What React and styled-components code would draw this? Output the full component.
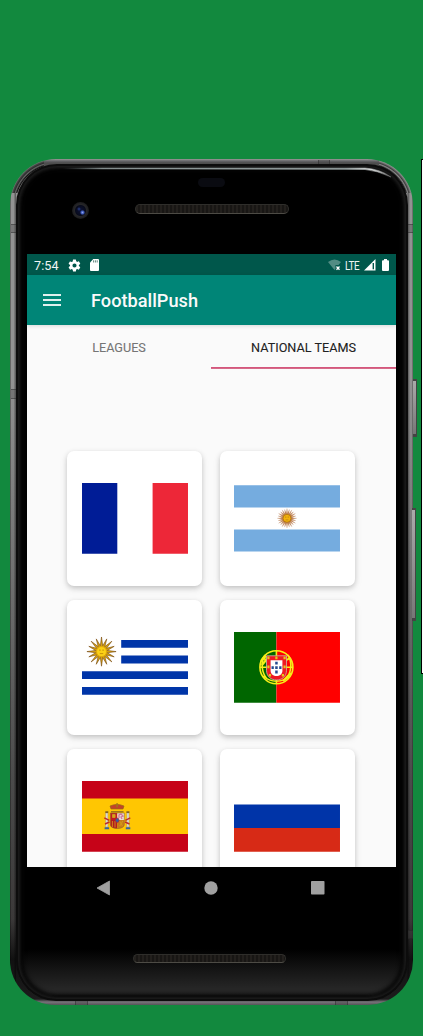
import React from "react";
import styled, { createGlobalStyle } from "styled-components";

const GlobalStyle = createGlobalStyle`
  *, *::before, *::after { box-sizing: border-box; }
  html, body { margin: 0; background: #12893e; }
  body { font-family: Roboto, "Liberation Sans", sans-serif; overflow: hidden; }
  svg { display: block; }
`;

const Page = styled.main`
  position: relative;
  width: 423px;
  height: 1036px;
  padding: 159px 0 0 10px;
  background: #12893e;
  overflow: hidden;
`;

const NextPanel = styled.aside`
  position: absolute;
  top: 159px;
  left: 421px;
  width: 40px;
  height: 515px;
  border: 1px solid #000;
  background: #fafafa;
`;

const Device = styled.div`
  position: relative;
  width: 403px;
  height: 846px;
  padding: 5px 5px 4px 6px;
  border-radius: 46px 46px 45px 45px;
  background:
    radial-gradient(circle at 46px 46px, transparent 40px, #111 41px, #666 42.5px, #2b2b2b 43.5px, #4a4a4a 45px, #777 46px) 0 0 / 34px 34px no-repeat,
    radial-gradient(circle at -12px 46px, transparent 40px, #222 41px, #888 42.5px, #3c3c3c 43.5px, #777 45px, #999 46px) 100% 0 / 34px 34px no-repeat,
    linear-gradient(90deg, rgba(0,0,0,.45) 0, transparent 1.5px, transparent 3.5px, rgba(0,0,0,.45) 6px, transparent 6px, transparent 397px, rgba(0,0,0,.4) 398px, transparent 400px, transparent 401.5px, rgba(0,0,0,.35) 403px),
    linear-gradient(#9c9a99 0, #66666a 2px, #4c4c4c 4px, #929292 34px, #929292 220px, #737373 400px, #4b4b4b 620px, #3b3939 760px, #111 800px, #1c1c1c 840px, #77747a 843px, #565358 846px);
`;

const SideKey = styled.span`
  position: absolute;
  z-index: 1;
  left: ${(p) => p.$x}px;
  top: ${(p) => p.$y}px;
  width: 4px;
  height: ${(p) => p.$h}px;
  border-radius: 0 1px 1px 0;
  border: solid #444;
  border-width: 2px 1px 3px 0;
  background: linear-gradient(#aaa, #777);
`;

const Antenna = styled.span`
  position: absolute;
  left: ${(p) => p.$x}px;
  top: ${(p) => p.$y}px;
  width: ${(p) => p.$w}px;
  height: ${(p) => p.$h}px;
  background: rgba(70, 70, 70, 0.35);
  border: solid rgba(30, 30, 30, 0.4);
  border-width: ${(p) => (p.$w > p.$h ? "0 1px" : "1px 0")};
`;

const Face = styled.div`
  position: relative;
  display: flex;
  flex-direction: column;
  height: 837px;
  padding: 0 11px;
  border-radius: 41px 41px 40px 40px;
  background: linear-gradient(transparent 785px, #161616 807px, #2c2c2c 831px, #090909 833px), #000;
  box-shadow: inset 0 0 0 2px #0c0c0c, inset 0 0 3px 4px #1c1c1c, inset 0 0 4px 7px #050505;
`;

const GlassShine = styled.svg`
  position: absolute;
  left: 47px;
  top: 2px;
`;

const Forehead = styled.header`
  position: relative;
  flex: 0 0 90px;
`;

const Sensor = styled.span`
  position: absolute;
  left: 171px;
  top: 14px;
  width: 27px;
  height: 9px;
  border-radius: 5px;
  background: #0a0b11;
`;

const Camera = styled.span`
  position: absolute;
  left: 44.5px;
  top: 37.5px;
  width: 17px;
  height: 17px;
  border-radius: 50%;
  background:
    radial-gradient(circle at 10.5px 10.5px, #8fa6f0 0, #3a56b8 1.5px, transparent 2.6px),
    radial-gradient(circle at 7px 7px, #293f8c 0, transparent 2px),
    radial-gradient(circle, #0c1238 0, #080b1c 5px, #262628 6px, #222224 7px, #1a1a1c 8.5px);
`;

const Grille = styled.span`
  position: absolute;
  left: ${(p) => p.$x}px;
  top: ${(p) => p.$y}px;
  width: ${(p) => p.$w}px;
  height: ${(p) => p.$h}px;
  border-radius: 5px;
  border: 1px solid #2f2e2b;
  border-bottom-color: #4d4b45;
  background: repeating-linear-gradient(90deg, #23201d 0 2px, #181614 2px 4px);
`;

const Screen = styled.section`
  display: flex;
  flex-direction: column;
  flex: 0 0 613px;
  width: 369px;
  overflow: hidden;
  background: #fafafa;
`;

const StatusBar = styled.div`
  display: flex;
  align-items: center;
  flex: 0 0 21px;
  padding: 1px 7px 0;
  color: #f0f5f4;
  background: #00574b;
  font-size: 12.6px;
`;

const Clock = styled.span`
  width: 34px;
  letter-spacing: 0.1px;
`;

const StatusIcons = styled.div`
  display: flex;
  align-items: center;
  gap: ${(p) => p.$gap}px;
  margin-left: ${(p) => (p.$end ? "auto" : 0)};
`;

const Network = styled.span`
  display: inline-block;
  width: 16px;
  margin-left: 1px;
  font-size: 12.4px;
  transform: scaleX(0.8);
  transform-origin: left center;
  letter-spacing: -0.5px;
`;

const AppBar = styled.div`
  position: relative;
  display: flex;
  align-items: center;
  flex: 0 0 50px;
  padding: 0 16px;
  gap: 30.5px;
  color: #fafafa;
  background: #008577;
  box-shadow: 0 1px 4px rgba(0, 0, 0, 0.14);
`;

const MenuButton = styled.button`
  display: flex;
  flex-direction: column;
  gap: 3px;
  width: 17.5px;
  padding: 0;
  border: 0;
  background: none;
`;

const MenuLine = styled.span`
  height: 2px;
  background: #e0f0ee;
`;

const Title = styled.h1`
  margin: 0;
  font-size: 18.2px;
  font-weight: 500;
`;

const Tabs = styled.nav`
  display: grid;
  grid-template-columns: 184px 185px;
  flex: 0 0 44px;
`;

const Tab = styled.button`
  padding: 1px 0 0;
  border: 0;
  background:
    linear-gradient(${(p) => (p.$active ? "#e7a0b6, #c92a5a 40%, #d05578 70%, #f3d0da" : "transparent, transparent")})
    0 41.500px / 100% 2px no-repeat;
  color: ${(p) => (p.$active ? "#212121" : "#757575")};
  font: 400 12.65px Roboto, sans-serif;
  -webkit-text-stroke: 0.1px;
`;

const TeamGrid = styled.div`
  display: grid;
  grid-template-columns: 135px 135px;
  grid-auto-rows: 134.5px;
  column-gap: 17.4px;
  row-gap: 14.7px;
  padding: 82px 0 0 40.4px;
`;

const TeamCard = styled.article`
  display: grid;
  place-items: center;
  border-radius: 7px;
  background: #fff;
  box-shadow: 0 2px 5px rgba(0, 0, 0, 0.17), 0 3px 8px rgba(0, 0, 0, 0.08);
`;

const NavBar = styled.footer`
  display: flex;
  align-items: center;
  justify-content: space-between;
  flex: 0 0 42px;
  padding: 0 72px 0 69px;
`;

const Chin = styled.div`
  position: relative;
  flex: 1;
`;

function FlagFrame({ children, label }) {
  return (
    <svg width="106" height="70.7" viewBox="0 0 106 70.7" role="img" aria-label={label}>
      {children}
    </svg>
  );
}

function Sun({ cx, cy, inner, outer, rays, core, thin }) {
  const points = Array.from({ length: rays * 2 }, (_, i) => {
    const a = (i * Math.PI) / rays - Math.PI / 2;
    const r = i % 2 ? inner : outer * (i % 4 ? 0.94 : 1);
    return `${cx + Math.cos(a) * r},${cy + Math.sin(a) * r}`;
  }).join(" ");
  return (
    <g>
      <polygon points={points} fill={thin ? "#c18453" : "#d6a211"} stroke={thin ? "#b27958" : "#75470a"} strokeWidth={thin ? 0.2 : 0.6} />
      <circle cx={cx} cy={cy} r={core} fill={thin ? "#f3b20c" : "#fbd116"} stroke={thin ? "#a66808" : "#d79d0b"} strokeWidth=".7" />
      <path d={`M${cx - core * 0.5} ${cy - core * 0.3}h${core * 0.35}m${core * 0.3} 0h${core * 0.35}M${cx - core * 0.35} ${cy + core * 0.4}h${core * 0.7}`} stroke="#b98309" strokeWidth=".8" fill="none" />
    </g>
  );
}

const France = () => (
  <FlagFrame label="France">
    <path fill="#001c96" d="M0 0h35.3v70.7H0z" />
    <path fill="#ed2738" d="M70.6 0H106v70.7H70.6z" />
  </FlagFrame>
);

const Argentina = () => (
  <FlagFrame label="Argentina">
    <path fill="#75acdf" d="M0 2.2h106v22.2H0zM0 46.4h106v22.2H0z" />
    <Sun cx={53} cy={35.3} inner={5} outer={9.7} rays={24} core={4} thin />
  </FlagFrame>
);

const Uruguay = () => (
  <FlagFrame label="Uruguay">
    <path fill="#0035a8" d="M39.2 7.9H106v7.8H39.2zM39.2 23.6H106v7.8H39.2zM0 39.3h106v7.8H0zM0 55h106v7.8H0z" />
    <Sun cx={19.5} cy={19.6} inner={6} outer={14.6} rays={16} core={5} />
  </FlagFrame>
);

const Portugal = () => (
  <FlagFrame label="Portugal">
    <path fill="#060" d="M0 0h42.4v70.7H0z" />
    <path fill="red" d="M42.4 0H106v70.7H42.4z" />
    <g fill="none" stroke="#f7ee18" strokeWidth="1.6">
      <circle cx="42.4" cy="35.3" r="16.5" />
      <path d="M42.4 18.8v33M26 35.3h33M29 26c7 5 20 5 27 0M29 44c8 7 19 7 27 0M31 23c-5 8-3 18 2 24M54 23c5 8 3 18-2 24" />
      <path d="M27 29l5-5M28 33l4-5M52 46l5-5M49 49l5-5" strokeWidth="2.2" />
    </g>
    <path d="M32.5 23.8h20v14.5c0 13-20 13-20 0z" fill="#ee1822" stroke="#c8b9ab" strokeWidth=".8" />
    <path d="M36.6 28.3h11.8v10.4c0 7-11.8 7-11.8 0z" fill="#fff" />
    <g fill="#25488f">
      <path d="M41.2 29.8h2.500v2.800h-2.500zM41.200 34.200h2.500v2.800h-2.500zM41.200 38.600h2.500v2.800h-2.500zM37.500 34.200h2.300v2.800h-2.300zM45.200 34.200h2.300v2.800h-2.300z" />
    </g>
    <g fill="#e5c51c">
      <path d="M33.3 24.4h2.2v2.8h-2.2zM41.3 24.4h2.2v2.8h-2.2zM49.5 24.4h2.2v2.8h-2.2zM33.3 33.5h2.2v2.8h-2.2zM49.5 33.5h2.2v2.8h-2.2zM34.9 42h2.2v2.4h-2.2zM47.8 42H50v2.4h-2.2z" />
    </g>
  </FlagFrame>
);

const Spain = () => (
  <FlagFrame label="Spain">
    <path fill="#c60318" d="M0 0h106v70.7H0z" />
    <path fill="#ffc602" d="M0 17.6h106V53H0z" />
    <path d="M29 28l-1-3 3-1 4-.8 4 .8 3 1-1 3z" fill="#c2432a" stroke="#986b17" strokeWidth=".7" />
    <path d="M34.3 22.3h1.6v4h-1.6zM29 30h12.5v1.6H29z" fill="#a07719" />
    <path d="M28.3 32h7v7h-7z" fill="#bd1c22" />
    <path d="M35.3 32h7v7h-7z" fill="#eadbd6" />
    <path d="M37 37v-3l2-1 2 2-2 1 1 2" fill="none" stroke="#cf749c" strokeWidth="1.3" />
    <path d="M28.3 39h7v8.5c-4 0-7-1-7-4z" fill="#b31b1d" />
    <path d="M35.3 39h7v4.5c0 3-3 4-7 4z" fill="#c97b19" />
    <path d="M30.5 33.5h2.6v3h-2.6zM30.4 40v6M33 40v6.5M37.5 40l3 5M40.8 40l-3 5" fill="#d5a41c" stroke="#d4a11b" strokeWidth=".8" />
    <path d="M28.3 32h14v11.5c0 5.4-14 5.4-14 0z" fill="none" stroke="#8f6529" strokeWidth=".6" />
    <ellipse cx="35.3" cy="39.3" rx="1.8" ry="2.2" fill="#315fa1" stroke="#bd242c" strokeWidth=".6" />
    <path d="M23.6 32h2.3v14h-2.3zM44.8 32h2.3v14h-2.3z" fill="#dedcd5" stroke="#947f62" strokeWidth=".35" />
    <path d="M22.6 46.3h4.5v2h-4.5zM43.8 46.3h4.5v2h-4.5z" fill="#3a64a0" />
    <path d="M23.3 30.2h3v1.8h-3zM44.4 30.2h3v1.8h-3z" fill="#806229" />
    <path d="M22.3 37l5 2.5M23 43l4.5-2M48.3 37l-5 2.5M47.5 43l-4.5-2" stroke="#bd2b2d" strokeWidth="1.4" />
  </FlagFrame>
);

const Russia = () => (
  <FlagFrame label="Russia">
    <path fill="#0034a8" d="M0 23.5h106v23.6H0z" />
    <path fill="#d72a16" d="M0 47.1h106v23.6H0z" />
  </FlagFrame>
);

const GearIcon = () => (
  <svg width="13" height="13" viewBox="1 1 22 22" fill="#fff">
    <path fillRule="evenodd" d="M19.4 13a8 8 0 0 0 0-2l2.1-1.7c.2-.1.2-.4.1-.6l-2-3.5c-.1-.2-.4-.3-.6-.2l-2.5 1a7 7 0 0 0-1.7-1L14.4 2.4c0-.2-.2-.4-.5-.4h-4c-.2 0-.4.2-.5.4L9 5.1a7 7 0 0 0-1.7 1l-2.5-1c-.2-.1-.5 0-.6.2l-2 3.5c-.1.2-.1.5.1.6L4.500 11a8 8 0 0 0 0 2l-2.2 1.7c-.2.1-.2.4-.1.6l2 3.5c.1.2.4.3.6.2l2.5-1 1.700 1 .4 2.600c.1.2.3.4.5.4h4c.3 0 .5-.2.5-.4l.4-2.600a7 7 0 0 0 1.700-1l2.500 1c.2.1.5 0 .6-.2l2-3.500c.1-.2.1-.5-.1-.6zM12 15.500a3.500 3.500 0 1 1 0-7 3.500 3.500 0 0 1 0 7z" />
  </svg>
);

const CardIcon = () => (
  <svg width="9" height="12" viewBox="0 0 9 12">
    <path d="M3.3 0H8q1 0 1 1v10q0 1-1 1H1q-1 0-1-1V3.500z" fill="#fff" />
    <path d="M3.600 1.300v2.200M5.400 1.300v2.200M7.200 1.300v2.200" stroke="#50786f" strokeWidth=".9" />
  </svg>
);

const WifiIcon = () => (
  <svg width="13" height="12" viewBox="0 0 13 12">
    <path d="M0 3Q6.5-2 13 3L10.500 6H7.500v4L6.500 11z" fill="#528c83" />
    <path d="M8.500 7.500l3 3.300m0-3.300l-3 3.300" stroke="#fff" strokeWidth="1.300" />
  </svg>
);

const SignalIcon = () => (
  <svg width="12" height="12" viewBox="0 0 12 12">
    <path d="M0 11.500L11.500 0v11.500z" fill="#fff" />
    <path d="M9.300 4v6.300" stroke="#00574b" strokeWidth="1.400" />
  </svg>
);

const BatteryIcon = () => (
  <svg width="7" height="12" viewBox="0 0 7 12">
    <path d="M2 0h3v1.300h1q1 0 1 1V11q0 1-1 1H1q-1 0-1-1V2.300q0-1 1-1h1z" fill="#fff" />
  </svg>
);

const flags = [France, Argentina, Uruguay, Portugal, Spain, Russia];

export default function App() {
  return (
    <Page>
      <GlobalStyle />
      <NextPanel />
      <Device>
        <SideKey $x={403} $y={220} $h={58} />
        <SideKey $x={402} $y={349} $h={113} />
        <Antenna $x={1} $y={65} $w={5} $h={9} />
        <Antenna $x={398} $y={65} $w={5} $h={9} />
        <Antenna $x={1} $y={230} $w={5} $h={10} />
        <Antenna $x={308} $y={1} $w={12} $h={4} />
        <Antenna $x={65} $y={841} $w={13} $h={5} />
        <Antenna $x={325} $y={841} $w={13} $h={5} />
        <Antenna $x={398} $y={771} $w={5} $h={9} />
        <Face>
          <GlassShine width="330" height="14" viewBox="0 0 330 14">
            <defs>
              <linearGradient id="shine">
                <stop offset="0" stopColor="#4b5557" stopOpacity="0" />
                <stop offset=".12" stopColor="#8c9696" />
                <stop offset=".86" stopColor="#8c9696" />
                <stop offset=".94" stopColor="#d5d8d8" />
                <stop offset="1" stopColor="#777" />
              </linearGradient>
            </defs>
            <path d="M0 2H302Q317 3 328 11Q314 4.5 302 3.5L0 2.8z" fill="url(#shine)" stroke="url(#shine)" strokeWidth=".5" />
          </GlassShine>
          <Forehead>
            <Sensor />
            <Camera />
            <Grille $x={108} $y={40} $w={154} $h={10} />
          </Forehead>
          <Screen>
            <StatusBar>
              <Clock>7:54</Clock>
              <StatusIcons $gap={9}>
                <GearIcon />
                <CardIcon />
              </StatusIcons>
              <StatusIcons $end $gap={3}>
                <WifiIcon />
                <Network>LTE</Network>
                <SignalIcon />
                <StatusIcons $gap={0}>
                  <svg width="3" height="1" />
                  <BatteryIcon />
                </StatusIcons>
              </StatusIcons>
            </StatusBar>
            <AppBar>
              <MenuButton aria-label="Menu">
                <MenuLine />
                <MenuLine />
                <MenuLine />
              </MenuButton>
              <Title>FootballPush</Title>
            </AppBar>
            <Tabs>
              <Tab>LEAGUES</Tab>
              <Tab $active>NATIONAL TEAMS</Tab>
            </Tabs>
            <TeamGrid>
              {flags.map((Flag, i) => (
                <TeamCard key={i}>
                  <Flag />
                </TeamCard>
              ))}
            </TeamGrid>
          </Screen>
          <NavBar>
            <svg width="14" height="16" viewBox="0 0 14 16">
              <path d="M1 8L13.5 1v14z" fill="#a0a0a0" stroke="#a0a0a0" strokeWidth=".8" strokeLinejoin="round" />
            </svg>
            <svg width="14" height="14" viewBox="0 0 14 14">
              <circle cx="7" cy="7" r="6.7" fill="#a0a0a0" />
            </svg>
            <svg width="14" height="14" viewBox="0 0 14 14">
              <rect width="13.5" height="13.5" rx=".8" fill="#a0a0a0" />
            </svg>
          </NavBar>
          <Chin>
            <Grille $x={106} $y={45} $w={153} $h={9} />
          </Chin>
        </Face>
      </Device>
    </Page>
  );
}
